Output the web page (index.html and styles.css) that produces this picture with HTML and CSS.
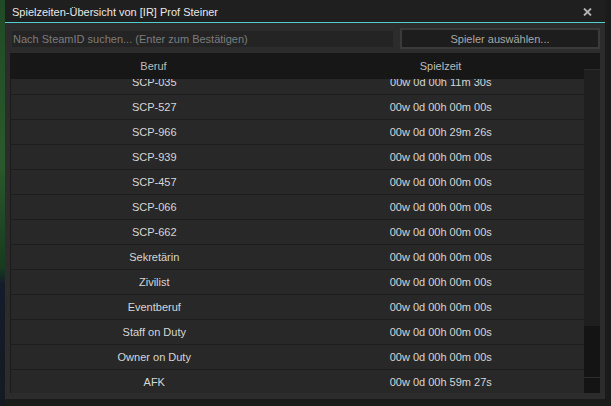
FILE: index.html
```html
<!DOCTYPE html>
<html lang="de">
<head>
    <meta charset="UTF-8">
    <meta name="viewport" content="width=device-width, initial-scale=1.0">
    <title>Spielzeiten-Übersicht</title>
    <link rel="stylesheet" href="styles.css">
</head>
<body>
    <div class="frame">
        <div class="titlebar">
            <span class="title">Spielzeiten-Übersicht von [IR] Prof Steiner</span>
            <svg class="close" width="9" height="8" viewBox="0 0 9 8">
                <path d="M1 0.5 L8 7.5 M8 0.5 L1 7.5" stroke="#b4b4b4" stroke-width="1.8" fill="none"/>
            </svg>
        </div>

        <div class="panel">
            <div class="toolbar">
                <div class="search">
                    <input type="text" placeholder="Nach SteamID suchen... (Enter zum Bestätigen)">
                </div>
                <button class="pick">Spieler auswählen...</button>
            </div>

            <div class="table">
                <div class="head">
                    <span>Beruf</span>
                    <span>Spielzeit</span>
                </div>
                <div class="body">
                    <div class="rows">
                        <div class="row"><span>SCP-035</span><span>00w 0d 00h 11m 30s</span></div>
                        <div class="row"><span>SCP-527</span><span>00w 0d 00h 00m 00s</span></div>
                        <div class="row"><span>SCP-966</span><span>00w 0d 00h 29m 26s</span></div>
                        <div class="row"><span>SCP-939</span><span>00w 0d 00h 00m 00s</span></div>
                        <div class="row"><span>SCP-457</span><span>00w 0d 00h 00m 00s</span></div>
                        <div class="row"><span>SCP-066</span><span>00w 0d 00h 00m 00s</span></div>
                        <div class="row"><span>SCP-662</span><span>00w 0d 00h 00m 00s</span></div>
                        <div class="row"><span>Sekretärin</span><span>00w 0d 00h 00m 00s</span></div>
                        <div class="row"><span>Zivilist</span><span>00w 0d 00h 00m 00s</span></div>
                        <div class="row"><span>Eventberuf</span><span>00w 0d 00h 00m 00s</span></div>
                        <div class="row"><span>Staff on Duty</span><span>00w 0d 00h 00m 00s</span></div>
                        <div class="row"><span>Owner on Duty</span><span>00w 0d 00h 00m 00s</span></div>
                        <div class="row"><span>AFK</span><span>00w 0d 00h 59m 27s</span></div>
                    </div>
                </div>
                <!-- vertical scrollbar sits over the right edge of the list -->
                <div class="scrollbar">
                    <div class="grip"></div>
                    <div class="track"></div>
                    <div class="down"></div>
                </div>
            </div>
        </div>
    </div>
</body>
</html>
```

FILE: styles.css
```css
body {
    margin: 0;
    width: 611px;
    height: 406px;
    overflow: hidden;
    font-family: 'Liberation Sans', Arial, sans-serif;
    font-size: 11px;
    /* game world behind the window */
    background:
        linear-gradient(to bottom, #1f4a26 0, #2a5a2c 40%, #173a20 66%, #141c2a 70%, #151a22 100%) left top / 5px 100% no-repeat,
        #1b1b1a;
}
.frame {
    margin-left: 5px;
    width: 600px;
    height: 399px;
    display: flex;
    flex-direction: column;
    background: #2c2c2c;
}
.titlebar {
    height: 22px;
    flex: none;
    display: flex;
    align-items: center;
    justify-content: space-between;
    padding: 0 13px 0 7px;
    background: #1f1f1f;
    border-bottom: 1px solid #52cccc;
}
.title {
    color: #e8e8e8;
    padding-top: 1px;
}
.close {
    display: block;
    margin-top: 1px;
}
.panel {
    flex: 1;
    display: flex;
    flex-direction: column;
    padding: 5px 5px 6px 5px;
    min-height: 0;
}
.toolbar {
    display: flex;
    align-items: center;
    gap: 5px;
    height: 21px;
    flex: none;
}
.search {
    width: 381px;
    padding: 0 2px;
}
.search input {
    display: block;
    width: 100%;
    height: 16px;
    box-sizing: border-box;
    margin: 0;
    padding: 0 1px;
    border: none;
    outline: none;
    background: #242424;
    color: #d0d0d0;
    font-family: inherit;
    font-size: 11px;
}
.search input::placeholder {
    color: #7c7c7c;
}
.pick {
    flex: 1;
    height: 21px;
    margin: 0;
    padding: 0;
    border: 2px solid #3a3a3a;
    background: #1d1d1d;
    color: #a8a8a8;
    font-family: inherit;
    font-size: 11px;
}
.table {
    position: relative;
    flex: 1;
    margin-top: 4px;
    display: flex;
    flex-direction: column;
    min-height: 0;
}
.head {
    height: 26px;
    flex: none;
    display: flex;
    align-items: center;
    padding-right: 16px;
    background: #171717;
    color: #bcbcbc;
}
.head span, .row span {
    flex: 1;
    text-align: center;
}
.body {
    flex: 1;
    overflow: hidden;
    margin-right: 16px;
    border-left: 1px solid #1c1c1c;
}
.rows {
    margin-top: -10px;
}
.row {
    height: 24px;
    display: flex;
    align-items: center;
    border-top: 1px solid #1d1d1d;
    background: #282828;
    color: #d6d6d6;
}
.scrollbar {
    position: absolute;
    top: 16px;
    right: 0;
    bottom: 0;
    width: 16px;
    display: flex;
    flex-direction: column;
}
.grip {
    height: 256px;
    background: #1f1f1f;
    border-top: 1px solid #2a2a2a;
}
.track {
    flex: 1;
    background: #141414;
}
.down {
    height: 15px;
    background: #141414;
    border-top: 1px solid #2e2e2e;
}
```
